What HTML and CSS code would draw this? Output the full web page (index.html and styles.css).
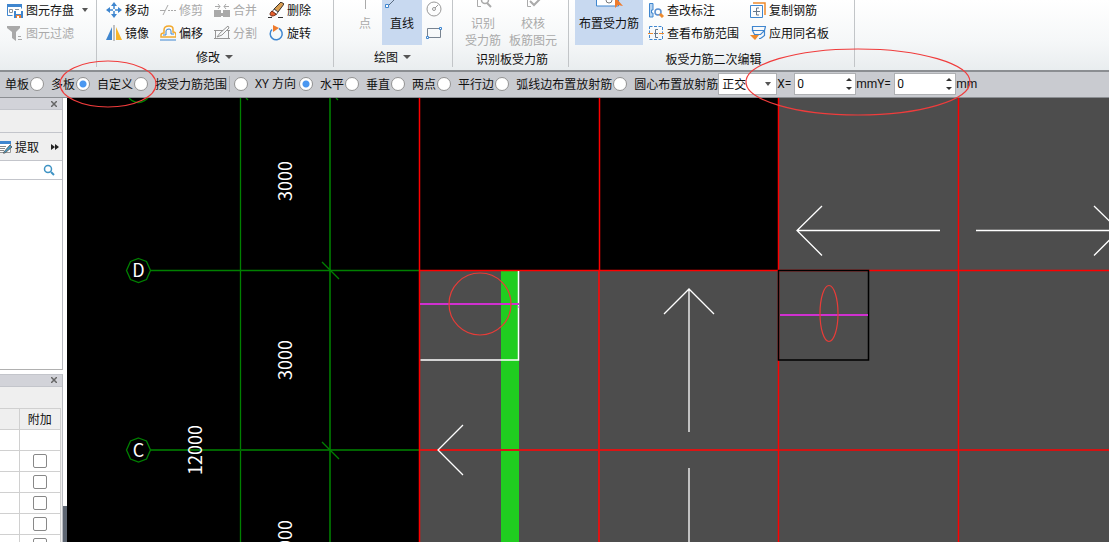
FILE: index.html
```html
<!DOCTYPE html>
<html lang="zh-CN">
<head>
<meta charset="utf-8">
<title>板受力筋</title>
<link rel="stylesheet" href="styles.css">
</head>
<body>
<header class="ribbon">
  <section class="group group-file">
    <div class="tools">
      <button class="tool"><svg width="16" height="16" viewBox="0 0 16 16" fill="none"><path d="M5.500 13.500h-5v-11h14v4" fill="#fff" stroke="#3f86cf"/><path d="M0 2h15v3H0z" fill="#3f86cf"/><path d="M2.500 7.500h3v3h-3zM8 7.500h4" stroke="#8a929c"/><path d="M7 9h9v7H7z" fill="#3f86cf"/><path d="M9 9h5v3H9z" fill="#fff"/><path d="M9 13h5v3H9z" fill="#ee7b2d"/><path d="M10 14h2v2h-2z" fill="#fff"/></svg>图元存盘<i class="caret"></i></button>
      <button class="tool" disabled><svg width="16" height="16" viewBox="0 0 16 16"><path d="M0 1h13v2L9 7v9l-4-3V7L0 3z" fill="#a9a9a9"/><path d="M11 11.500h3M11 14.500h4" stroke="#a9a9a9"/></svg>图元过滤</button>
    </div>
  </section>
  <section class="group group-modify">
    <div class="tools">
      <button class="tool"><svg width="16" height="16" viewBox="0 0 16 16" fill="#3f86cf"><path d="m8 0 3 4H5zM8 16l3-4H5zM0 8l4-3v6zM16 8l-4-3v6z"/><path d="M8 3v4M8 9v4M3 8h4M9 8h4" stroke="#3f86cf" stroke-width="1.500"/></svg>移动</button>
      <button class="tool" disabled><svg width="16" height="16" viewBox="0 0 16 16" fill="none" stroke="#a9a9a9"><path d="M0 8.500h5M3 13 8 3M8 8.500h2M11 8.500h2M14 8.500h2"/></svg>修剪</button>
      <button class="tool" disabled><svg width="16" height="16" viewBox="0 0 16 16" fill="#a9a9a9"><path d="M0 8h7v7H0zM9 8h7v7H9zM6 11h4v3H6z"/><path d="M1 4.500h5M4 2l2 2.500L4 7M15 4.500h-5M12 2l-2 2.500L12 7" stroke="#a9a9a9" fill="none"/></svg>合并</button>
      <button class="tool"><svg width="16" height="16" viewBox="0 0 16 16"><path d="m6 7 7-7 3 2-6 8z" fill="#d89d51" stroke="#3b3128"/><path d="m6 7 4 3-2 3-4-3z" fill="#fff" stroke="#555"/><path d="M4 9c-3 2-2 5 0 5s4-1 4-2z" fill="#e45e2c" stroke="#6b2c18"/><path d="M0 15.500h4M10 15.500h5" stroke="#333"/></svg>删除</button>
      <button class="tool"><svg width="16" height="16" viewBox="0 0 16 16"><path d="M6 2v13H0z" fill="#3f86cf"/><path d="M8 0v16" stroke="#888"/><path d="M10 2v13h6z" fill="#f7b52b"/></svg>镜像</button>
      <button class="tool"><svg width="16" height="16" viewBox="0 0 16 16" fill="none"><path d="M1 12v-2q0-2 3-2V5q0-4 5-4 4 0 4 3v3q3 0 3 3v2z" stroke="#f2a92d" stroke-width="1.500"/><path d="M3 10h3V6q0-2 3-2 2 0 2 2v3h3M0 15h16" stroke="#3f86cf"/></svg>偏移</button>
      <button class="tool" disabled><svg width="16" height="16" viewBox="0 0 16 16" fill="none" stroke="#969696"><path d="M9 5.500H1.500v8h13v-8M0 5.500h3M13 5.500h3M0 13.500h16"/><path d="m3 12 3-4 8-7 1 2-7 7z"/></svg>分割</button>
      <button class="tool"><svg width="16" height="16" viewBox="0 0 16 16" fill="none"><path d="M11 3.500a6 6 0 1 1-7 1" stroke="#3f86cf" stroke-width="1.500"/><path d="m5 0 6 3-6 4z" fill="#ee7b2d"/></svg>旋转</button>
    </div>
    <h2 class="title">修改<i class="caret"></i></h2>
  </section>
  <section class="group group-draw">
    <div class="drawing">
      <button class="big" disabled><svg width="24" height="16" viewBox="0 0 24 16"><path d="M12.500 0v9" stroke="#aaa"/></svg>点</button>
      <button class="big active"><svg width="24" height="16" viewBox="0 0 24 16" fill="none"><path d="m4 5 9-9" stroke="#596b80"/><path d="M.5 4.500h3v3h-3z" fill="#fff" stroke="#3f86cf"/></svg>直线</button>
      <div class="shapes">
        <button class="icon" aria-label="圆"><svg width="16" height="16" viewBox="0 0 16 16" fill="none" stroke="#999"><circle cx="8" cy="8" r="7"/><circle cx="8" cy="8" r="1.500"/><path d="m9 7 3-3"/></svg></button>
        <button class="icon" aria-label="矩形"><svg width="16" height="16" viewBox="0 0 16 16" fill="#fff"><path d="M1.500 4.500h13v9h-13z" fill="none" stroke="#788390"/><path d="M.5 12.500h2v2h-2zM13.500 3.500h2v2h-2z" stroke="#3f86cf"/></svg></button>
      </div>
    </div>
    <h2 class="title">绘图<i class="caret"></i></h2>
  </section>
  <section class="group group-detect">
    <div class="pair">
      <button class="big" disabled><svg width="24" height="16" viewBox="0 0 24 16" fill="none" stroke="#aaa"><path d="M10 6.500H6.500V-2"/><circle cx="14" cy="0" r="3.500" stroke-width="1.500"/><path d="m16 3 4 4" stroke-width="2"/></svg>识别<br>受力筋</button>
      <button class="big" disabled><svg width="24" height="16" viewBox="0 0 24 16" fill="none" stroke="#aaa"><path d="M10 6.500H6.500V-2"/><path d="m9 1 4 4 7-7" stroke-width="2"/></svg>校核<br>板筋图元</button>
    </div>
    <h2 class="title">识别板受力筋</h2>
  </section>
  <section class="group group-edit">
    <div class="editing">
      <button class="big active wide"><svg width="32" height="16" viewBox="0 0 32 16" fill="none"><path d="M3.500-2v8h22v-8" fill="#fff" stroke="#3f86cf"/><circle cx="16" cy="0" r="3" stroke="#777"/><path d="M22-3v11l3-3 5 1z" fill="#ee7b2d"/></svg>布置受力筋</button>
      <div class="tools">
        <button class="tool"><svg width="16" height="16" viewBox="0 0 16 16" fill="none"><path d="M5 1.500H1.500V15H5v-4H3.500V8H5z" fill="#b8d4f1" stroke="#3f86cf"/><circle cx="10" cy="10" r="3" stroke="#5a8fd0" stroke-width="1.500"/><path d="m12 12 3 3" stroke="#ee8a2d" stroke-width="3"/></svg>查改标注</button>
        <button class="tool"><svg width="16" height="16" viewBox="0 0 16 16" fill="none"><path d="M3 1h12v12" stroke="#ee8a2d" stroke-width="1.500"/><path d="M.5 3.500h12v12H.5z" stroke="#3f86cf"/><path d="M9 6H6.500v7H9M3 9.500h7" stroke="#65778b"/></svg>复制钢筋</button>
        <button class="tool"><svg width="16" height="16" viewBox="0 0 16 16" fill="none"><path d="M1.500 1.500h13v13h-13z" stroke="#3f86cf" stroke-dasharray="3 1.500"/><path d="M0 8.500h5M11 8.500h5" stroke="#ee8a2d"/><path d="M10 4.500H7.500v8H10M6 8.500h4" stroke="#65778b"/></svg>查看布筋范围</button>
        <button class="tool"><svg width="16" height="16" viewBox="0 0 16 16" fill="none"><path d="M2.500 5V1.500h13l-1 4h-12l2 4h6l4-4v5l-4 3H9" stroke="#3f86cf" stroke-width="1.200"/><path d="M0 10h9l-4 5z" fill="#ee8a2d"/></svg>应用同名板</button>
      </div>
    </div>
    <h2 class="title">板受力筋二次编辑</h2>
  </section>
</header>

<form class="options">
  <label class="choice first"><input type="radio" name="range">单板</label>
  <label class="choice"><input type="radio" name="range">多板</label>
  <label class="choice"><input type="radio" name="range" checked>自定义</label>
  <label class="choice"><input type="radio" name="range">按受力筋范围</label>
  <span class="rule"></span>
  <label class="choice direction"><input type="radio" name="dir">XY 方向</label>
  <label class="choice"><input type="radio" name="dir" checked>水平</label>
  <label class="choice"><input type="radio" name="dir">垂直</label>
  <label class="choice"><input type="radio" name="dir">两点</label>
  <label class="choice"><input type="radio" name="dir">平行边</label>
  <label class="choice"><input type="radio" name="dir">弧线边布置放射筋</label>
  <label class="choice"><input type="radio" name="dir">圆心布置放射筋</label>
  <span class="picker"><select aria-label="捕捉方式"><option>正交</option></select><i class="caret"></i></span>
  <label class="axis" for="x">X=</label>
  <span class="spin"><input id="x" type="text" value="0"><span class="steps"><i class="up"></i><i class="down"></i></span></span>
  <span class="unit">mm</span>
  <label class="axis" for="y">Y=</label>
  <span class="spin"><input id="y" type="text" value="0"><span class="steps"><i class="up"></i><i class="down"></i></span></span>
  <span class="unit">mm</span>
</form>

<main class="work">
  <aside class="side">
    <section class="panel panel-list">
      <div class="bar"><button class="close" aria-label="关闭"><svg width="6" height="6" viewBox="0 0 6 6" stroke="#666" stroke-width="1.500"><path d="m0 0 6 6M6 0 0 6"/></svg></button></div>
      <div class="blank"></div>
      <div class="extract"><button class="tool"><svg width="12" height="14" viewBox="0 0 12 14" fill="none"><path d="M0 1.500h10.500v11H0" fill="#fff" stroke="#999"/><path d="M0 1h11v3H0z" fill="#3f86cf"/><path d="M0 6.500h6M0 8.500h5M0 10.500h4" stroke="#888"/><path d="m3 13 7-8 2 2-7 6z" fill="#3f9fce" stroke="#666"/></svg>提取</button><button class="icon" aria-label="更多"><svg width="8" height="6" viewBox="0 0 8 6" fill="#222"><path d="m0 0 4 3-4 3zM4 0l4 3-4 3z"/></svg></button></div>
      <div class="search"><button class="icon" aria-label="搜索"><svg width="12" height="12" viewBox="0 0 12 12" fill="none" stroke="#3f93c4"><circle cx="5" cy="5" r="3.500" stroke-width="1.500"/><path d="m8 8 3 3" stroke-width="2"/></svg></button></div>
      <div class="list"></div>
    </section>
    <section class="panel panel-props">
      <div class="bar"><button class="close" aria-label="关闭"><svg width="6" height="6" viewBox="0 0 6 6" stroke="#666" stroke-width="1.500"><path d="m0 0 6 6M6 0 0 6"/></svg></button></div>
      <div class="blank"></div>
      <table class="props">
        <thead><tr><th></th><th>附加</th></tr></thead>
        <tbody>
          <tr><td></td><td></td></tr>
          <tr><td></td><td><input type="checkbox" aria-label="附加 1"></td></tr>
          <tr><td></td><td><input type="checkbox" aria-label="附加 2"></td></tr>
          <tr><td></td><td><input type="checkbox" aria-label="附加 3"></td></tr>
          <tr><td></td><td><input type="checkbox" aria-label="附加 4"></td></tr>
          <tr><td></td><td><input type="checkbox" aria-label="附加 5"></td></tr>
        </tbody>
      </table>
    </section>
  </aside>
  <div class="splitter"><span></span></div>
  <svg class="drawing-area" viewBox="67 98 1042 444" preserveAspectRatio="xMinYMin slice" fill="none">
    <path d="M67 98h1042v444H67z" fill="#000"/>
    <path d="M779 98h330v444H420V270h359z" fill="#4d4d4d"/>
    <path d="M501 270h18v272h-18z" fill="#20cd20"/>
    <g stroke="#008000" stroke-width="1.300">
      <path d="M240.500 98v444"/>
      <path d="M330 98v444" stroke="#006400" stroke-width="2"/>
      <path d="M151 270.500h269"/>
      <path d="M151 450h269" stroke="#006400" stroke-width="2"/>
      <path d="m322 262 17 17M322 442l17 17M246 98l2 2M336 98l2 2"/>
      <path d="m138.500 258.500 8 3 4 9-4 9-8 3-8-3-4-9 4-9z"/>
      <path d="m138.500 438 8 3 4 9-4 9-8 3-8-3-4-9 4-9zM129 98q9 9 19 0"/>
    </g>
    <g class="cad-text">
      <text x="138.500" y="277">D</text>
      <text x="138.500" y="457">C</text>
      <text transform="translate(292 181) rotate(-90)">3000</text>
      <text transform="translate(292 360) rotate(-90)">3000</text>
      <text transform="translate(292 540) rotate(-90)">3000</text>
      <text transform="translate(202 450) rotate(-90)">12000</text>
    </g>
    <g stroke="#f00" stroke-width="1.500">
      <path d="M419.500 98v444"/>
      <path d="M599.500 98v172"/>
      <path d="M599 270v272M420 450h359" stroke="#dc1414" stroke-width="2"/>
      <path d="M778.500 98v444M420 270.500h689"/>
      <path d="M958.500 98v444M779 450h330"/>
    </g>
    <g stroke="#fff" stroke-width="1.300">
      <path d="M940 230.500H797M822 206l-25 24.500 25 25M976 230.500h142M1094 206l25 24.500-25 25"/>
      <path d="M689 432V290M664 314l25-25 25 25M689 468v74M463 425l-25 25 25 25"/>
      <path d="M518.500 271v89H420.500" stroke-width="1.500"/>
    </g>
    <path d="M778.500 270.500h90v89.500h-90z" stroke="#000" stroke-width="1.500"/>
    <path d="M420 304h99M780 315h88" stroke="#d030d0" stroke-width="2"/>
    <path d="M518 307h2" stroke="#d030d0"/>
    <g stroke="#e83c38" stroke-width="1.200">
      <circle cx="480" cy="304" r="31"/>
      <ellipse cx="829" cy="313.500" rx="9" ry="28"/>
    </g>
  </svg>
</main>
<svg class="marks" width="1000" height="130" viewBox="0 0 1000 130" fill="none" stroke="#f03c3c" stroke-width="1.200"><ellipse cx="108" cy="84" rx="48" ry="23"/><ellipse cx="858" cy="82" rx="112" ry="33"/></svg>
</body>
</html>
```
FILE: styles.css
```css
* { box-sizing: border-box; }
html, body { height: 100%; margin: 0; }
body {
  display: flex;
  flex-direction: column;
  overflow: hidden;
  font: 12px/16px "Noto Sans CJK SC", sans-serif;
  color: #111;
}
svg { display: block; flex: none; }
button, input, select { font: inherit; color: inherit; }
button { padding: 0; border: 0; background: none; white-space: nowrap; }
button:disabled { color: #aaa; }
.caret {
  display: inline-block;
  border: 3px solid transparent;
  border-top: 4px solid #555;
  border-bottom: 0;
}

/* Ribbon */
.ribbon {
  display: flex;
  flex: none;
  background: linear-gradient(#fff, #f5f7f8 60%, #e9edef);
  border-bottom: 2px solid #8b8e92;
}
.group {
  position: relative;
  display: flex;
  flex-direction: column;
  justify-content: space-between;
  height: 70px;
  padding-bottom: 3px;
}
.group::after {
  content: "";
  position: absolute;
  right: 0;
  top: 0;
  bottom: 3px;
  width: 1px;
  background: #c2c5c8;
}
.group-file { width: 97px; padding-left: 7px; }
.group-modify { width: 237px; padding-left: 9px; }
.group-draw { width: 119px; }
.group-detect { width: 116px; }
.group-edit { width: 286px; padding-left: 6px; }
.tools { display: grid; row-gap: 7px; padding-top: 2px; align-content: start; }
.group-modify .tools { grid-template-columns: repeat(4, 54px); }
.tool { display: flex; align-items: center; gap: 3px; height: 16px; }
.tool .caret { margin-left: 5px; }
.title {
  display: flex;
  align-items: center;
  justify-content: center;
  gap: 5px;
  margin: 0;
  font-size: 12px;
  font-weight: 400;
}
.group-modify .title, .group-draw .title { height: 18px; padding-bottom: 2px; }
.group-modify .title { padding-right: 11px; }
.group-draw .title { padding-right: 2px; }
.group-detect .title { padding-left: 2px; }
.group-edit .title { padding-right: 3px; }
.title .caret { border-width: 4px 4px 0; }
.drawing { display: flex; padding-left: 14px; }
.big {
  display: flex;
  flex-direction: column;
  align-items: center;
  min-width: 40px;
  height: 45px;
  line-height: 17px;
  padding-bottom: 2px;
}
.big svg { margin-bottom: -2px; }
.drawing .big { min-width: 34px; }
.drawing .big.active { min-width: 40px; }
.drawing .big.active svg { margin-right: 10px; }
.big.active { background: #c8d9f0; }
.shapes { display: grid; row-gap: 7px; align-content: start; padding-left: 4px; padding-top: 1px; }
.pair { display: flex; justify-content: space-between; padding: 0 12px 0 10px; }
.editing { display: flex; gap: 5px; }
.editing .wide { width: 68px; }
.editing .tools { grid-template-columns: 102px auto; }

/* Option bar */
.options {
  display: flex;
  flex: none;
  align-items: center;
  height: 26px;
  margin: 0;
  padding-bottom: 1px;
  background: #c9cbd0;
  border-bottom: 1px solid #8b8e92;
  white-space: nowrap;
}
.choice { display: flex; align-items: center; }
.choice.first { margin-left: -17px; }
.choice.direction { width: 65px; }
.choice input {
  appearance: none;
  width: 14px;
  height: 14px;
  margin: 0 7px 0 1px;
  border: 1px solid #929292;
  border-radius: 50%;
  background: #fff;
}
.choice input:checked { background: radial-gradient(circle, #4a97f0 3px, #fff 4px); }
.rule { width: 1px; height: 16px; margin: 0 3px 0 2px; background: #aaadb2; }
.picker { position: relative; width: 59px; height: 22px; }
.picker select {
  appearance: none;
  width: 100%;
  height: 100%;
  padding: 0 3px;
  border: 1px solid #aeb0b3;
  border-radius: 0;
  background: #fff;
}
.picker .caret { position: absolute; right: 6px; top: 9px; }
.axis { width: 17px; }
.spin {
  display: flex;
  align-items: center;
  width: 62px;
  height: 22px;
  padding-right: 3px;
  border: 1px solid #aeb0b3;
  background: #fff;
}
.spin input { flex: 1; min-width: 0; height: 16px; padding: 0 2px; border: 0; outline: 0; }
.steps { display: grid; row-gap: 6px; }
.up, .down { border: 3px solid transparent; }
.up { border-top: 0; border-bottom: 3px solid #333; }
.down { border-bottom: 0; border-top: 3px solid #333; }
.axis, .spin, .unit { font-family: Roboto, "Noto Sans", sans-serif; }
.choice.direction { font-family: "Noto Sans", "Noto Sans CJK SC", sans-serif; }
.unit { width: 21px; }

/* Workspace */
.work { display: flex; flex: 1; min-height: 0; background: #fff; }
.side {
  display: flex;
  flex-direction: column;
  gap: 4px;
  width: 63px;
  flex: none;
}
.panel { border-right: 1px solid #b9bbc1; background: #efefef; }
.panel-list { display: flex; flex-direction: column; flex: 272 0 0; border-bottom: 1px solid #b0b0b0; }
.panel-props { flex: 168 0 0; overflow: hidden; border-top: 1px solid #c3c5cb; }
.bar {
  display: flex;
  align-items: center;
  justify-content: flex-end;
  height: 12px;
  padding-right: 5px;
  background: #d2d3d9;
  border-bottom: 1px solid #c3c5cb;
}
.blank { height: 22px; }
.panel-props .blank { height: 21px; }
.extract {
  display: flex;
  align-items: center;
  justify-content: space-between;
  height: 29px;
  padding-right: 3px;
  border-top: 1px solid #c3c5cb;
  border-bottom: 1px solid #c3c5cb;
}
.search {
  display: flex;
  align-items: center;
  justify-content: flex-end;
  height: 19px;
  padding-right: 7px;
  background: #fff;
  border-bottom: 1px solid #c3c5cb;
}
.list { flex: 1; background: #fff; }
.props { width: 61px; border-collapse: collapse; table-layout: fixed; background: #fff; }
.props th, .props td { height: 21px; padding: 0; border: 1px solid #d0d0d0; border-left: 0; text-align: center; }
.props th { font-weight: 400; background: #efefef; }
.props th:first-child { width: 19px; }
.props input {
  appearance: none;
  display: block;
  width: 14px;
  height: 14px;
  margin: 0 auto;
  border: 1px solid #888;
  border-radius: 2px;
  background: #fff;
}
.splitter { display: flex; flex-direction: column; justify-content: flex-end; width: 4px; flex: none; }
.splitter span { height: 8%; background: #5e6672; }
.drawing-area { flex: 1; min-width: 0; height: 100%; }
.cad-text { fill: #fff; font-size: 18px; text-anchor: middle; }
.marks { position: absolute; left: 0; top: 0; pointer-events: none; }
```
